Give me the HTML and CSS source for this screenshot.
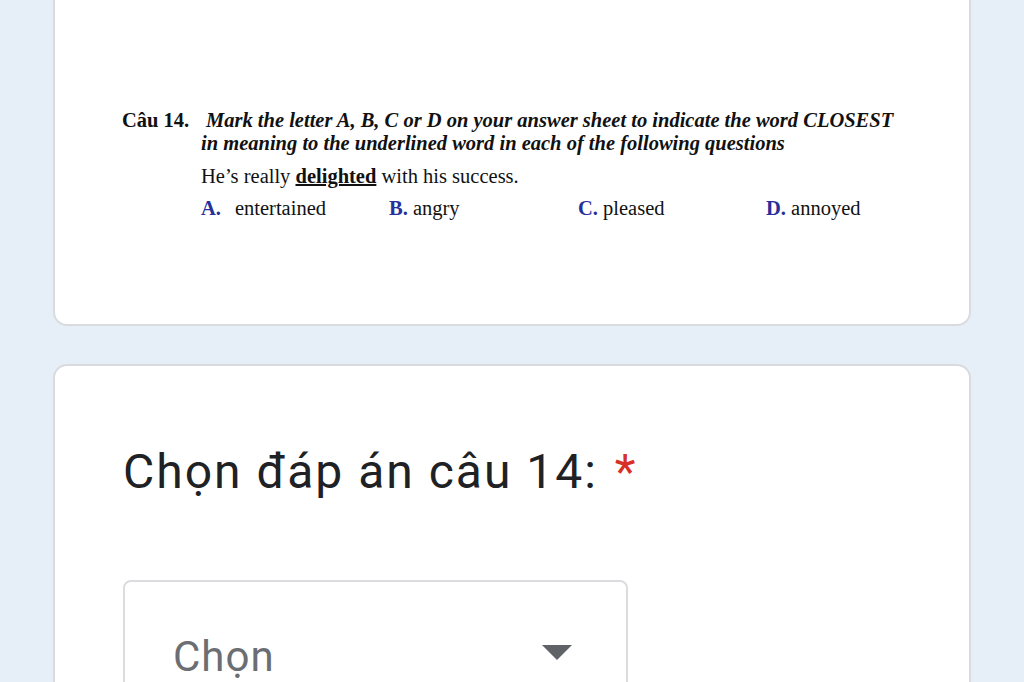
FILE: index.html
```html
<!DOCTYPE html>
<html lang="vi">
<head>
    <meta charset="UTF-8">
    <meta name="viewport" content="width=device-width, initial-scale=1.0">
    <title>Câu 14</title>
    <link rel="stylesheet" href="styles.css">
</head>
<body>
    <div class="page">
        <!-- Question card (image of the exam question) -->
        <div class="card card-question">
            <div class="question">
                <span class="q-num">Câu 14.</span>
                <div class="q-body">
                    <p class="q-prompt">Mark the letter A, B, C or D on your answer sheet to indicate the word CLOSEST in meaning to the underlined word in each of the following questions</p>
                    <p class="q-sentence">He’s really <u>delighted</u> with his success.</p>
                    <div class="options">
                        <span><b class="letter letter-a">A.</b>entertained</span>
                        <span><b class="letter">B.</b> angry</span>
                        <span><b class="letter">C.</b> pleased</span>
                        <span><b class="letter">D.</b> annoyed</span>
                    </div>
                </div>
            </div>
        </div>

        <!-- Answer card -->
        <div class="card card-answer">
            <h2 class="answer-title">Chọn đáp án câu 14: <span class="required">*</span></h2>
            <div class="select-box">
                <span class="select-text">Chọn</span>
                <svg class="select-arrow" width="30" height="15" viewBox="0 0 30 15">
                    <path d="M0 0 L30 0 L15 15 Z" fill="#5f6368"/>
                </svg>
            </div>
        </div>
    </div>
</body>
</html>
```

FILE: styles.css
```css
body {
    margin: 0;
    padding: 0;
    background: #e6eff7;
    height: 682px;
    overflow: hidden;
}

.page {
    padding: 0 53px;
}

.card {
    background: #fff;
    border: 2px solid #d9dcdf;
    border-radius: 14px;
    box-sizing: border-box;
}

/* Top card, its top edge is scrolled out of view */
.card-question {
    margin-top: -30px;
    height: 356px;
    padding: 137px 0 0 67px;
    font-family: "Liberation Serif", "Times New Roman", serif;
    font-size: 20.5px;
    color: #111;
}

.question {
    display: flex;
}

.q-num {
    font-weight: bold;
    width: 79px;
    flex: none;
    line-height: 23px;
}

.q-body p {
    margin: 0;
}

.q-prompt {
    font-weight: bold;
    font-style: italic;
    text-indent: 5px;
    line-height: 23px;
    width: 700px;
}

.q-sentence {
    margin-top: 10px !important;
    line-height: 23px;
}

.q-sentence u {
    font-weight: bold;
    text-decoration-thickness: 2px;
}

.options {
    display: grid;
    grid-template-columns: 188px 189px 188px 150px;
    margin-top: 9px;
    line-height: 23px;
}

.letter {
    color: #27309a;
}

.letter-a {
    margin-right: 14px;
}

.card-answer {
    margin-top: 38px;
    height: 400px;
    padding: 78px 0 0 68px;
    font-family: Roboto, "Noto Sans", sans-serif;
}

.answer-title {
    margin: 0;
    font-size: 48px;
    font-weight: 400;
    letter-spacing: 2px;
    color: #202124;
    line-height: 56px;
}

.required {
    color: #d93025;
    margin-left: 3px;
}

.select-box {
    margin-top: 80px;
    width: 505px;
    height: 140px;
    border: 2px solid #dadce0;
    border-radius: 8px;
    box-sizing: border-box;
    display: flex;
    align-items: flex-start;
    justify-content: space-between;
    padding: 50px 54px 0 48px;
}

.select-text {
    font-size: 42px;
    letter-spacing: 1px;
    color: #6b6e72;
}

.select-arrow {
    margin-top: 13px;
}
```
